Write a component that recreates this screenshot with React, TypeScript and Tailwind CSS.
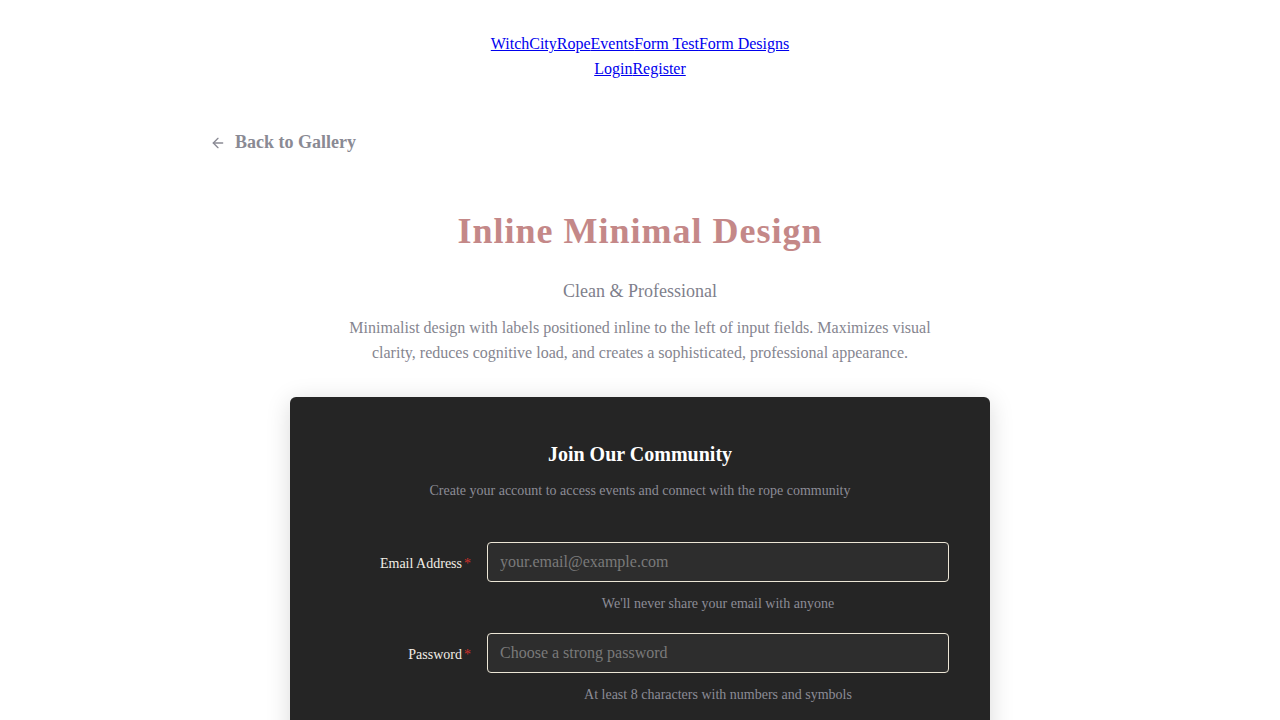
import { ArrowLeft } from "lucide-react";

export default function App() {
  return (
    <div className="min-h-screen bg-white font-['Liberation_Serif',serif] text-black">

      {/* Nav */}

      <nav className="flex flex-col items-center pt-[31px] text-base leading-[25px]">
        <div>
          <a href="#" className="text-[#0000ee] underline">WitchCityRope</a>
          <a href="#" className="text-[#0000ee] underline">Events</a>
          <a href="#" className="text-[#0000ee] underline">Form Test</a>
          <a href="#" className="text-[#0000ee] underline">Form Designs</a>
        </div>
        <div>
          <a href="#" className="text-[#0000ee] underline">Login</a>
          <a href="#" className="text-[#0000ee] underline">Register</a>
        </div>
      </nav>

      <div className="mx-auto w-[860px]">

        {/* Back */}

        <a href="#" className="mt-[48px] flex items-center gap-[9px] text-[18px] font-bold leading-[27px] text-[#8a8a94]">
          <ArrowLeft size={16} strokeWidth={2} />
          <span>Back to Gallery</span>
        </a>

        {/* Header */}

        <div className="mt-[53px] flex flex-col items-center text-center">
          <h1 className="text-[36px] font-bold leading-[44px] tracking-[1px] text-[#c48888]">
            Inline Minimal Design
          </h1>
          <p className="mt-[26px] text-[18px] leading-[24px] text-[#7f7f8c]">
            Clean &amp; Professional
          </p>
          <p className="mt-[12px] w-[600px] text-base leading-[25px] text-[#85858f]">
            Minimalist design with labels positioned inline to the left of input fields. Maximizes visual clarity, reduces cognitive load, and creates a sophisticated, professional appearance.
          </p>
        </div>

        {/* Card */}

        <div className="mx-auto mt-[32px] w-[700px] rounded-[6px] bg-[#252525] px-[41px] pt-[43px] pb-10 shadow-[0_4px_24px_rgba(0,0,0,0.15)]">

          <h2 className="text-center text-[20px] font-bold leading-[28px] text-white">
            Join Our Community
          </h2>
          <p className="mt-[13px] text-center text-sm leading-[20px] text-[#8c8c96]">
            Create your account to access events and connect with the rope community
          </p>

          <div className="mt-[41px] flex flex-col gap-[19px]">

            <div>
              <div className="flex items-center gap-[16px]">
                <label className="mt-[4px] w-[140px] text-right text-sm text-[#f2eee6]">
                  Email Address<span className="ml-[2px] text-[#d0302a]">*</span>
                </label>
                <input
                  className="h-[40px] flex-1 rounded-[4px] border border-[#ece6d6] bg-[#2d2d2d] px-3 text-base text-white outline-none placeholder:text-[#7a7a7a]"
                  placeholder="your.email@example.com"
                />
              </div>
              <div className="ml-[156px] mt-[12px] text-center text-sm leading-[20px] text-[#8c8c96]">
                We'll never share your email with anyone
              </div>
            </div>

            <div>
              <div className="flex items-center gap-[16px]">
                <label className="mt-[4px] w-[140px] text-right text-sm text-[#f2eee6]">
                  Password<span className="ml-[2px] text-[#d0302a]">*</span>
                </label>
                <input
                  type="password"
                  className="h-[40px] flex-1 rounded-[4px] border border-[#ece6d6] bg-[#2d2d2d] px-3 text-base text-white outline-none placeholder:text-[#7a7a7a]"
                  placeholder="Choose a strong password"
                />
              </div>
              <div className="ml-[156px] mt-[12px] text-center text-sm leading-[20px] text-[#8c8c96]">
                At least 8 characters with numbers and symbols
              </div>
            </div>

          </div>

        </div>

      </div>

    </div>
  );
}
